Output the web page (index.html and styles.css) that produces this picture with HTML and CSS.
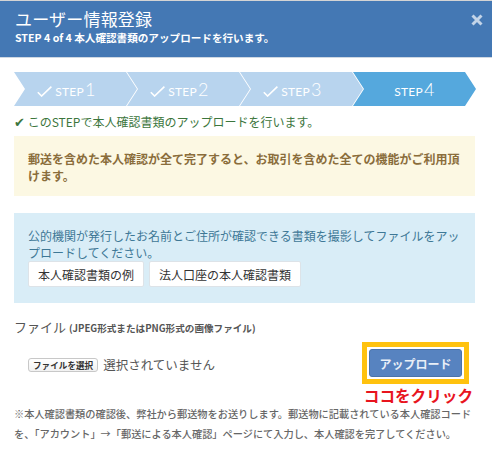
FILE: index.html
```html
<!DOCTYPE html>
<html lang="ja">
<head>
<meta charset="utf-8">
<title>ユーザー情報登録</title>
<link rel="stylesheet" href="styles.css">
</head>
<body>
<div class="modal">
  <div class="header">
    <div class="head-text">
      <h1 class="title">ユーザー情報登録</h1>
      <p class="sub">STEP 4 of 4 本人確認書類のアップロードを行います。</p>
    </div>
    <span class="close"><svg width="12" height="12" viewBox="0 0 12 12"><path d="M1.5 1.5 L10.5 10.5 M10.5 1.5 L1.5 10.5" stroke="#c3d4e8" stroke-width="3" fill="none"/></svg></span>
  </div>
  <div class="content">
    <div class="steps">
      <div class="step"><span class="lbl"><svg class="chk" width="15" height="11" viewBox="0 0 15 11"><path d="M0.8 6.2 L4.6 10 L14.4 0.6" stroke="#fff" stroke-width="1.6" fill="none"/></svg>STEP<b>1</b></span></div>
      <div class="step"><span class="lbl"><svg class="chk" width="15" height="11" viewBox="0 0 15 11"><path d="M0.8 6.2 L4.6 10 L14.4 0.6" stroke="#fff" stroke-width="1.6" fill="none"/></svg>STEP<b>2</b></span></div>
      <div class="step"><span class="lbl"><svg class="chk" width="15" height="11" viewBox="0 0 15 11"><path d="M0.8 6.2 L4.6 10 L14.4 0.6" stroke="#fff" stroke-width="1.6" fill="none"/></svg>STEP<b>3</b></span></div>
      <div class="step active"><span class="lbl">STEP<b>4</b></span></div>
    </div>
    <p class="ok"><span class="ok-mark">✔</span> このSTEPで本人確認書類のアップロードを行います。</p>
    <div class="alert warn">郵送を含めた本人確認が全て完了すると、お取引を含めた全ての機能がご利用頂けます。</div>
    <div class="alert info">
      <p class="info-text">公的機関が発行したお名前とご住所が確認できる書類を撮影してファイルをアップロードしてください。</p>
      <div class="btns">
        <span class="btn">本人確認書類の例</span>
        <span class="btn">法人口座の本人確認書類</span>
      </div>
    </div>
    <p class="file-label">ファイル <small>(JPEG形式またはPNG形式の画像ファイル)</small></p>
    <div class="file-row">
      <div class="file-input">
        <span class="file-btn">ファイルを選択</span>
        <span class="file-none">選択されていません</span>
      </div>
      <div class="highlight"><span class="upload">アップロード</span></div>
    </div>
    <p class="annot">ココをクリック</p>
    <p class="note">※本人確認書類の確認後、弊社から郵送物をお送りします。郵送物に記載されている本人確認コードを、「アカウント」→「郵送による本人確認」ページにて入力し、本人確認を完了してください。</p>
  </div>
</div>
</body>
</html>
```
FILE: styles.css
```css
* { box-sizing: border-box; }
html, body { margin: 0; padding: 0; background: #fff; }
body {
  font-family: "Noto Sans CJK JP", "Lato", sans-serif;
  color: #555;
  width: 492px;
  height: 452px;
  overflow: hidden;
}
p { margin: 0; }

.header {
  display: flex;
  justify-content: space-between;
  align-items: flex-start;
  background: #4478b4;
  border-top: 1px solid #d4d4d4;
  border-bottom: 1px solid #cfd8e3;
  height: 58px;
  padding: 7px 9px 0 15px;
  color: #fff;
}
.title {
  margin: 0;
  font-size: 17px;
  font-weight: 400;
  line-height: 22px;
  letter-spacing: 0.2px;
}
.sub {
  font-size: 10.6px;
  font-weight: 700;
  line-height: 15px;
}
.close {
  display: flex;
  margin-top: 6px;
}

.content {
  padding: 0 17px 0 14px;
}

.steps {
  display: flex;
  height: 34px;
  margin-top: 14px;
}
.step {
  flex: none;
  width: 123px;
  height: 34px;
  background: #b8d4ee;
  clip-path: polygon(0 0, 112px 0, 123px 50%, 112px 100%, 0 100%, 11px 50%);
  display: flex;
  align-items: center;
  justify-content: center;
  color: #fff;
}
.step + .step { margin-left: -10px; }
.step.active { background: #55a8dd; }
.lbl {
  display: inline-flex;
  align-items: baseline;
  font-family: "Lato", sans-serif;
  font-size: 12px;
  letter-spacing: 0.3px;
  padding-top: 1px;
}
.lbl b {
  font-weight: 300;
  font-size: 18px;
  margin-left: 1px;
  line-height: 1;
}
.chk {
  margin-left: -18px;
  margin-right: 3px;
  align-self: center;
  position: relative;
  top: 2px;
}

.ok {
  margin-top: 8px;
  color: #3c763d;
  font-size: 12px;
  line-height: 16px;
}
.ok-mark { font-size: 13px; }

.alert {
  margin-top: 6px;
  font-size: 12px;
}
.warn {
  background: #fcf8e3;
  color: #8a6d3b;
  font-weight: 700;
  line-height: 17px;
  padding: 14px 13px 12px 14px;
  height: 60px;
}
.info {
  margin-top: 17px;
  background: #d9edf7;
  color: #3e7896;
  padding: 14px 13px 15px 14px;
  height: 90px;
}
.info-text { line-height: 17px; }
.btns {
  display: flex;
  gap: 5px;
}
.btn {
  display: inline-flex;
  align-items: center;
  height: 26px;
  padding: 0 9px;
  background: #fff;
  border: 1px solid #dde3e8;
  border-radius: 2px;
  color: #333;
  font-size: 12px;
}

.file-label {
  margin-top: 16px;
  font-size: 13px;
  line-height: 16px;
  color: #555;
}
.file-label small {
  font-size: 9.6px;
  font-weight: 700;
}

.file-row {
  display: flex;
  justify-content: space-between;
  align-items: center;
  margin-top: 6px;
  padding-right: 6px;
}
.file-input {
  display: flex;
  align-items: center;
  gap: 5px;
  padding-left: 14px;
  padding-top: 3px;
}
.file-btn {
  display: inline-flex;
  align-items: center;
  height: 14px;
  padding: 0 4px;
  border: 1px solid #c8c8c8;
  border-radius: 3px;
  background: linear-gradient(#fff, #f1f1f1);
  font-size: 8.6px;
  font-weight: 700;
  color: #333;
}
.file-none {
  font-size: 12.5px;
  color: #555;
}
.highlight {
  border: 5px solid #ffc20e;
  padding: 2px;
  background: #fff;
}
.upload {
  display: flex;
  align-items: center;
  justify-content: center;
  width: 93px;
  height: 28px;
  background: #5783c0;
  border: 1px solid #4a73ab;
  border-radius: 3px;
  color: #e9eff7;
  font-size: 12px;
  font-weight: 700;
}

.annot {
  margin-top: 3px;
  text-align: right;
  padding-right: 2px;
  color: #e8141e;
  font-size: 15.6px;
  font-weight: 700;
  line-height: 17px;
}

.note {
  font-size: 10.2px;
  line-height: 20px;
  color: #666;
  font-weight: 500;
}
```
